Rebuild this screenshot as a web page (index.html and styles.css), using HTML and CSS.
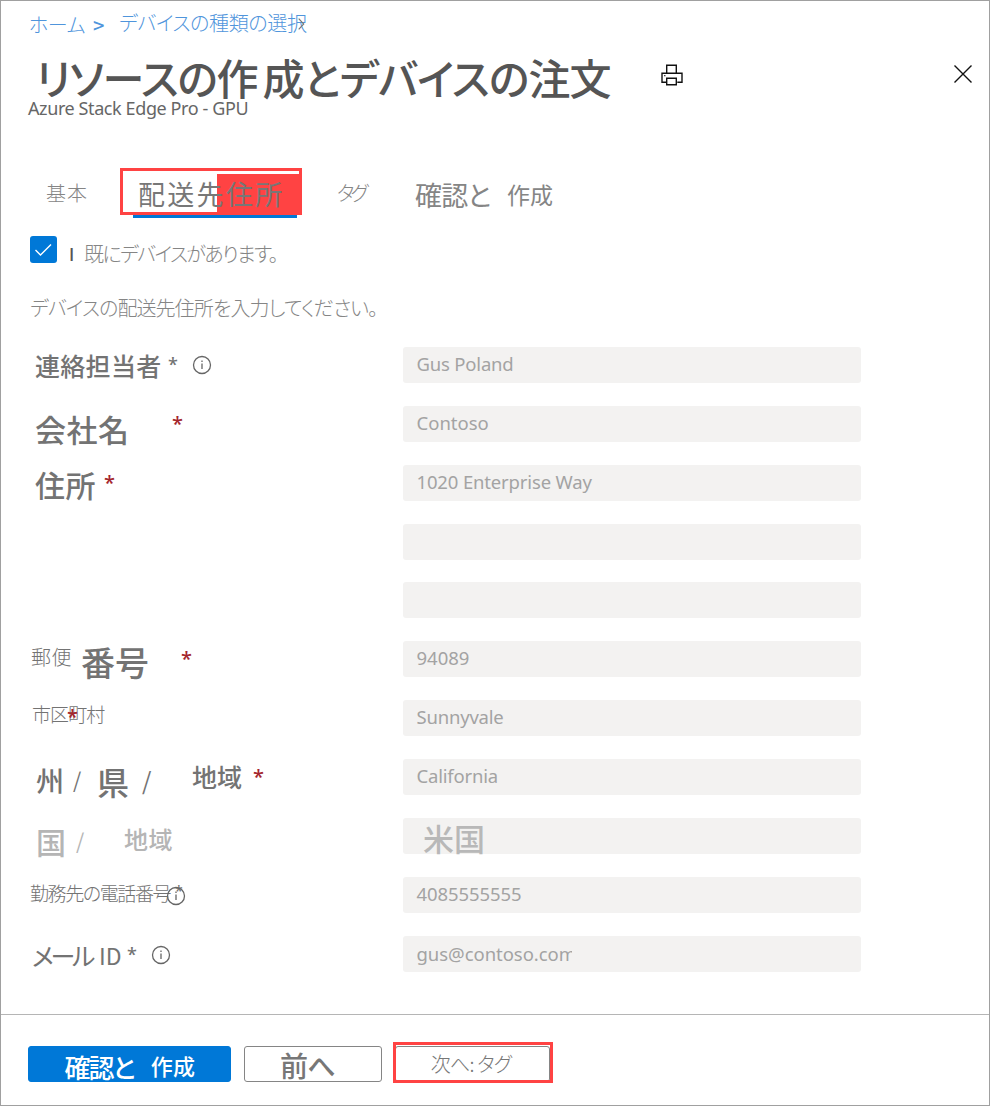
FILE: index.html
```html
<!DOCTYPE html>
<html lang="ja">
<head>
<meta charset="utf-8">
<title>リソースの作成とデバイスの注文</title>
<link rel="stylesheet" href="styles.css">
</head>
<body>
<main class="blade">
  <nav class="crumbs"><a class="t c-home">ホーム</a><span class="t c-sep">&gt;</span><a class="t c-type">デバイスの種類の選択</a><svg class="c-end" viewBox="0 0 7 12"><path d="M.7.7l5 5.300-5 5.300" fill="none" stroke="#777" stroke-width="1.200"/></svg></nav>
  <header class="head">
    <h1 class="t title">リソースの作<span class="title-rest">成とデバイスの注文</span></h1>
    <svg class="print" viewBox="0 0 22 22" fill="none" stroke="#111" stroke-width="1.4"><path d="M5.7 9V1.2h9.6V9M5.7 18.3H1V9.2h20v9.1h-4.700M5.7 14.2h9.6v6.600H5.700z"/><path d="M3.2 11.6h1.2"/></svg>
    <svg class="close" viewBox="0 0 18 18" fill="none" stroke="#111" stroke-width="1.4"><path d="M.5.5l17 17M17.5.5l-17 17"/></svg>
  </header>
  <p class="t sub">Azure Stack Edge Pro - GPU</p>
  <div class="tabs">
    <span class="t tab-basic">基本</span>
    <div class="tab-active"><span class="t tab-ship">配送先住所</span></div>
    <span class="t tab-tag">タグ</span>
    <span class="t tab-review">確認と</span>
    <span class="t tab-create">作成</span>
  </div>
  <div class="check">
    <svg class="box" viewBox="0 0 27 27"><rect width="27" height="27" rx="3" fill="#0078d7"/><path d="M5.5 14l5 5L21 8.500" fill="none" stroke="#fff" stroke-width="1.400"/></svg>
    <span class="t bar">I</span><span class="t have">既にデバイスがあります。</span>
  </div>
  <p class="t intro">デバイスの配送先住所を入力してください。</p>
  <div class="form">
    <label class="label"><span class="t l-contact">連絡担当者</span><span class="t star s1">*</span><svg class="info i1" viewBox="0 0 20 20"><circle cx="10" cy="10" r="8.500"/><path d="M10 8.500v5.500M10 5.500v1.500"/></svg></label><div class="field"><span class="t v1">Gus Poland</span></div>
    <label class="label"><span class="t l-company">会社名</span><span class="t star red s2">*</span></label><div class="field"><span class="t v2">Contoso</span></div>
    <label class="label"><span class="t l-addr">住所</span><span class="t star red s3">*</span></label><div class="field"><span class="t v3">1020 Enterprise Way</span></div>
    <span></span><div class="field"></div>
    <span></span><div class="field"></div>
    <label class="label"><span class="t l-post">郵便</span><span class="t l-num">番号</span><span class="t star red s4">*</span></label><div class="field"><span class="t v4">94089</span></div>
    <label class="label"><span class="t l-city">市区町村</span><span class="t star red s5">*</span></label><div class="field"><span class="t v5">Sunnyvale</span></div>
    <label class="label"><span class="t l-state">州</span><span class="t slash sl1">/</span><span class="t l-pref">県</span><span class="t slash sl2">/</span><span class="t l-region">地域</span><span class="t star red s6">*</span></label><div class="field"><span class="t v6">California</span></div>
    <label class="label dim"><span class="t l-country">国</span><span class="t slash sl3">/</span><span class="t l-area">地域</span></label><div class="field"><span class="t v7">米国</span></div>
    <label class="label"><span class="t l-phone">勤務先の電話番号</span><span class="t star s7">*</span><svg class="info i2" viewBox="0 0 20 20"><circle cx="10" cy="10" r="8.500"/><path d="M10 8.500v5.500M10 5.500v1.500"/></svg></label><div class="field"><span class="t v8">4085555555</span></div>
    <label class="label"><span class="t l-mail">メール</span><span class="t l-id">ID</span><span class="t star s8">*</span><svg class="info i3" viewBox="0 0 20 20"><circle cx="10" cy="10" r="8.500"/><path d="M10 8.500v5.500M10 5.500v1.500"/></svg></label><div class="field"><span class="t v9">gus@contoso.com</span></div>
  </div>
  <footer class="foot">
    <button class="btn primary"><span class="t b-review">確認と</span><span class="t b-create">作成</span></button>
    <button class="btn prev"><span class="t b-prev">前へ</span></button>
    <div class="mark"><button class="btn next"><span class="t b-next">次へ: タグ</span></button></div>
  </footer>
</main>
</body>
</html>
```
FILE: styles.css
```css
* { box-sizing: border-box; margin: 0; padding: 0; }
body { background: #fff; font-family: "Noto Sans CJK JP", sans-serif; font-feature-settings: "palt"; color: #737373; }
.blade { width: 990px; height: 1106px; border: 1px solid #a0a0a0; display: flex; flex-direction: column; overflow: hidden; }
.t { display: block; flex: none; line-height: 1; white-space: nowrap; font-weight: 500; }

/* Breadcrumbs and title */
.crumbs { display: flex; height: 44px; padding-left: 28px; color: #4f95dc; }
.c-home { font-size: 20px; width: 56px; margin-top: 14px; letter-spacing: -0.41px; font-weight: 300; }
.c-sep { font-size: 20px; width: 12px; margin: 14px 0 0 8px; }
.c-type { font-size: 20px; width: 188px; margin: 12px 0 0 14px; letter-spacing: -0.36px; font-weight: 300; }
.c-end { flex: none; width: 7px; height: 12px; margin: 17px 0 0 -9px; }

.head { display: flex; height: 54px; padding-left: 35px; }
.title { font-size: 42px; width: 576px; margin-top: 11px; letter-spacing: -1.2px; color: #555; }
.title-rest { margin-left: 5px; letter-spacing: -0.85px; }
.print { width: 22px; height: 22px; margin: 19px 0 0 49px; }
.close { width: 18px; height: 18px; margin: 20px 0 0 271px; }
.sub { font-family: "Noto Sans", sans-serif; font-size: 18px; width: 221px; margin: 0 0 0 27px; height: 69px; letter-spacing: -0.4px; font-weight: 400; color: #666; }

/* Tabs */
.tabs { display: flex; height: 68px; padding-left: 45px; color: #858585; }
.tab-basic { font-size: 20px; width: 42px; margin-top: 15px; letter-spacing: 1px; font-weight: 300; }
.tab-active { width: 182px; height: 50px; margin-left: 32px; padding-left: 18px; color: #777; background: linear-gradient(#0078d7, #0078d7) 13px 47px / 164px 3px no-repeat, linear-gradient(#ff4343, #ff4343) 97px 6px / 85px 41px no-repeat, linear-gradient(#ff4343, #ff4343) 0 0 / 182px 3px no-repeat, linear-gradient(#ff4343, #ff4343) 0 44px / 182px 3px no-repeat, linear-gradient(#ff4343, #ff4343) 0 0 / 3px 47px no-repeat, linear-gradient(#ff4343, #ff4343) 179px 0 / 3px 47px no-repeat; }
.tab-ship { font-size: 27px; width: 147px; margin-top: 12px; letter-spacing: 2.3px; font-weight: 400; }
.tab-tag { font-size: 20px; width: 32px; margin: 15px 0 0 35px; letter-spacing: -3.8px; font-weight: 300; }
.tab-review { font-size: 27px; width: 76px; margin: 13px 0 0 46px; letter-spacing: -0.8px; font-weight: 400; }
.tab-create { font-size: 23px; width: 46px; margin: 15px 0 0 16px; font-weight: 400; }

.check { display: flex; height: 60px; padding-left: 29px; color: #858585; }
.box { width: 27px; height: 27px; }
.bar { font-size: 17px; width: 6px; margin: 9px 0 0 12px; color: #555; }
.have { font-size: 20px; width: 198px; margin: 8px 0 0 9px; letter-spacing: -1.6px; font-weight: 300; }
.intro { font-size: 20px; width: 354px; height: 49px; margin: 2px 0 0 29px; letter-spacing: -0.9px; font-weight: 300; color: #858585; }

/* Address form */
.form { display: grid; grid-template-columns: 402px 458px; grid-auto-rows: 36px; row-gap: 22.86px; height: 667px; }
.label { display: flex; align-items: flex-start; }
.dim { color: #b5b5b5; }
.field { display: flex; background: #f3f2f1; border-radius: 3px; padding: 8px 0 0 13.5px; color: #a3a3a3; font-family: "Noto Sans", sans-serif; }
.field .t { font-size: 18.5px; font-weight: 400; }
.star { font-family: "Noto Sans", sans-serif; font-size: 20px; width: 12px; }
.red { color: #a4262c; }
.info { flex: none; width: 20px; height: 20px; fill: none; stroke: #666; stroke-width: 1.3; }

.l-contact { font-size: 25px; width: 127px; margin: 6px 0 0 34px; letter-spacing: 0.3px; }
.s1 { margin: 8px 0 0 6px; font-size: 18px; }
.i1 { margin: 8px 0 0 12px; }
.l-company { font-size: 31px; width: 95px; margin: 7px 0 0 34px; letter-spacing: 0.5px; }
.s2 { margin: 8px 0 0 42px; }
.l-addr { font-size: 30px; width: 62px; margin: 4px 0 0 34px; letter-spacing: 0.5px; }
.s3 { margin: 8px 0 0 7px; }
.l-post { font-size: 20px; width: 41px; margin: 6px 0 0 30px; letter-spacing: 0.5px; font-weight: 300; }
.l-num { font-size: 34px; width: 69px; margin: 4px 0 0 9px; }
.s4 { margin: 8px 0 0 31px; }
.l-city { font-size: 19px; width: 73px; margin: 4px 0 0 31px; letter-spacing: -0.9px; font-weight: 300; }
.s5 { margin: 7px 0 0 -38px; }
.l-state { font-size: 28px; width: 28px; margin: 7px 0 0 35px; }
.slash { font-size: 21px; width: 9px; font-weight: 400; }
.sl1 { margin: 10px 0 0 9px; }
.l-pref { font-size: 32px; width: 33px; margin: 6px 0 0 15px; }
.sl2 { margin: 9px 0 0 12px; font-size: 24px; width: 10px; }
.l-region { font-size: 25px; width: 50px; margin: 5px 0 0 40px; }
.s6 { margin: 8px 0 0 11px; }
.l-country { font-size: 30px; width: 30px; margin: 8px 0 0 35px; }
.sl3 { margin: 12px 0 0 10px; }
.l-area { font-size: 24px; width: 50px; margin: 9px 0 0 39px; letter-spacing: 0.5px; }
.l-phone { font-size: 19px; width: 141px; margin: 6px 0 0 29px; letter-spacing: -1.4px; font-weight: 300; }
.s7 { margin: 7px 0 0 4px; font-size: 14px; width: 9px; }
.i2 { margin: 9px 0 0 -18px; }
.l-mail { font-size: 25px; width: 60px; margin: 7px 0 0 31px; letter-spacing: -3.3px; font-weight: 400; }
.l-id { font-size: 23px; width: 23px; margin: 8px 0 0 7px; letter-spacing: 0; font-weight: 400; }
.s8 { margin: 9px 0 0 5px; font-size: 18px; }
.i3 { margin: 9px 0 0 12px; }

.v1 { letter-spacing: -0.19px; }
.v2 { letter-spacing: 0; }
.v3 { letter-spacing: -0.15px; }
.v5, .v6 { letter-spacing: -0.2px; }
.field .v7 { font-family: "Noto Sans CJK JP", sans-serif; font-size: 31px; width: 63px; height: 31px; margin: -4px 0 0 6.5px; font-weight: 500; color: #b8b8b8; }
.v8 { letter-spacing: -0.08px; }
.v9 { width: 155px; height: 26px; margin-top: 1px; overflow: hidden; letter-spacing: -0.04px; }

/* Footer buttons */
.foot { display: flex; border-top: 1px solid #b5b5b5; height: 91px; padding-left: 27px; }
.btn { display: flex; border: 1px solid #858585; border-radius: 3px; background: #fff; height: 36px; margin-top: 31px; font: inherit; color: #777; font-feature-settings: inherit; align-items: flex-start; }
.primary { width: 203px; background: #0078d7; border-color: #0078d7; color: #fff; }
.b-review { font-size: 26px; width: 70px; margin: 7px 0 0 35px; letter-spacing: -1.9px; }
.b-create { font-size: 22px; width: 46px; margin: 7px 0 0 16px; letter-spacing: 0.3px; }
.prev { width: 138px; margin-left: 13px; }
.b-prev { font-size: 28px; width: 55px; margin: 4px 0 0 35px; letter-spacing: -0.8px; }
.mark { width: 160px; height: 41px; margin: 27px 0 0 11px; border: 3px solid #ff4343; overflow: hidden; }
.next { width: 155px; margin: 1px 0 0 -1px; }
.b-next { font-size: 20px; width: 82px; margin: 7px 0 0 34px; letter-spacing: -0.8px; font-weight: 300; }
```
